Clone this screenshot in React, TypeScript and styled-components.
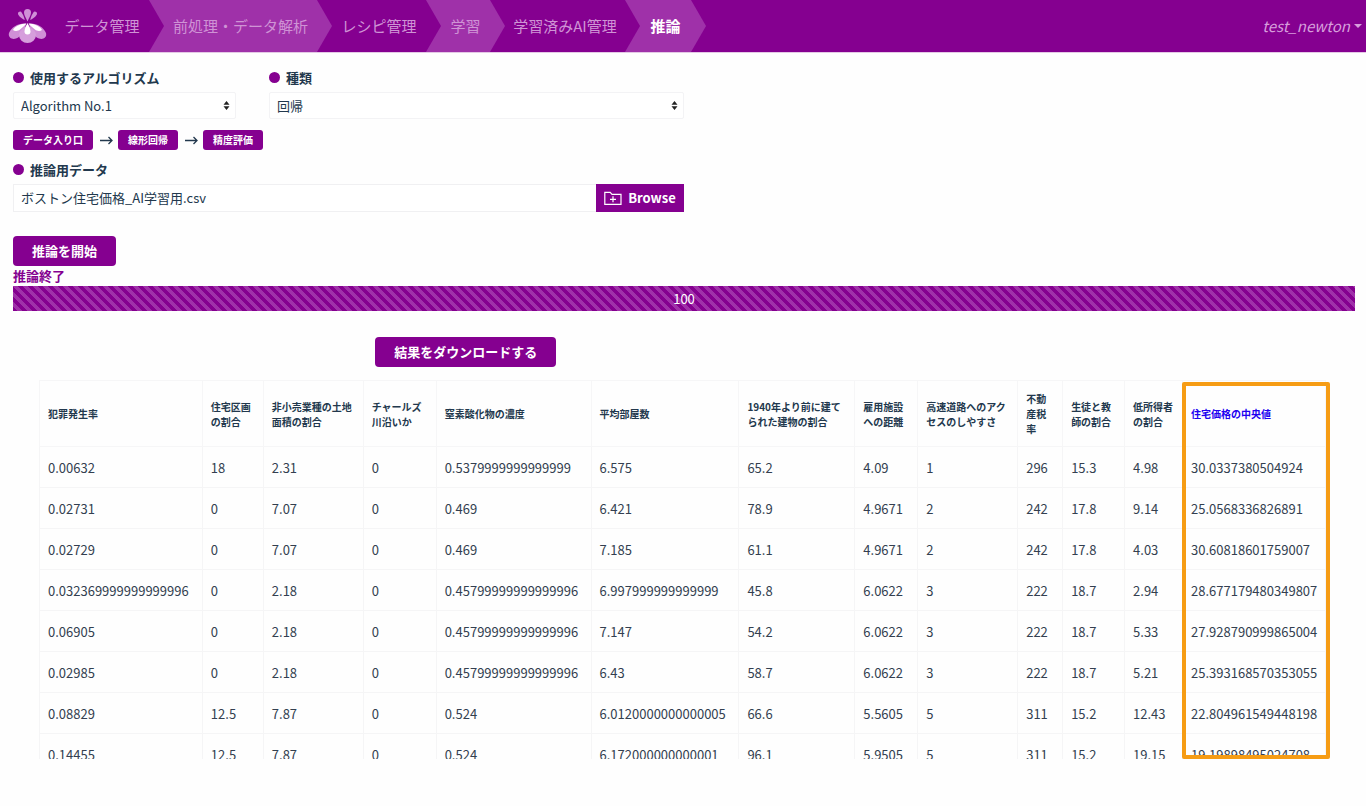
import React from "react";
import styled, { createGlobalStyle } from "styled-components";

const purple = "#850090";
const lightPurple = "#9f31a9";
const ink = "#22384d";

const GlobalStyle = createGlobalStyle`
  *, *::before, *::after { box-sizing: border-box; }
  body {
    margin: 0;
    background: #fefefe;
    color: ${ink};
    font-family: "Noto Sans CJK JP", sans-serif;
    font-size: 13px;
    line-height: 20px;
  }
  button, input, select { font: inherit; color: inherit; margin: 0; }
`;

const Header = styled.header`
  display: flex;
  align-items: center;
  height: 52px;
  background: ${purple};
  box-shadow: 0 1px 0 #e4c8e6;
`;

const LogoLink = styled.a`
  display: flex;
  padding-left: 8px;
`;

const Steps = styled.nav`
  display: flex;
  height: 100%;
`;

const Step = styled.a<{ $width: number; $tinted?: boolean; $active?: boolean; $order: number }>`
  position: relative;
  z-index: ${(p) => p.$order};
  display: flex;
  align-items: center;
  justify-content: center;
  width: ${(p) => p.$width}px;
  height: 100%;
  background: ${(p) => (p.$tinted ? lightPurple : purple)};
  color: ${(p) => (p.$active ? "#ffffff" : "#cf93d5")};
  font-size: 15px;
  font-weight: ${(p) => (p.$active ? 700 : 400)};
  text-decoration: none;
  white-space: nowrap;
  clip-path: polygon(0 0, calc(100% - 15px) 0, 100% 50%, calc(100% - 15px) 100%, 0 100%);

  &:first-child { padding-right: 8px; }
  & + & { margin-left: -15px; }
`;

const UserMenu = styled.button`
  display: flex;
  align-items: center;
  gap: 4px;
  margin-left: auto;
  padding: 0 4px 0 0;
  border: 0;
  background: none;
  color: #d79fdc;
  font-size: 15px;
  font-style: italic;
`;

const Caret = styled.span`
  border: 4px solid transparent;
  border-top-color: currentColor;
  border-bottom: 0;
`;

const Main = styled.main`
  padding: 17px 11px 0 13px;
`;

const Form = styled.form`
  width: 50%;
`;

const SelectGrid = styled.div`
  display: grid;
  grid-template-columns: 223fr 415fr;
  column-gap: 33px;
`;

const Label = styled.label`
  display: flex;
  align-items: center;
  gap: 6px;
  height: 17px;
  margin-bottom: 6px;
  font-weight: 700;

  &::before {
    content: "";
    width: 11px;
    height: 11px;
    border-radius: 50%;
    background: ${purple};
  }
`;

const SelectBox = styled.div`
  position: relative;

  svg {
    position: absolute;
    top: 9px;
    right: 6px;
    pointer-events: none;
  }
`;

const Select = styled.select`
  display: block;
  width: 100%;
  height: 27px;
  padding: 0 20px 0 7px;
  border: 1px solid #f3f3f5;
  border-radius: 2px;
  background: #ffffff;
  appearance: none;
`;

const Flow = styled.div`
  display: flex;
  align-items: center;
  margin: 11px 0;
`;

const FlowTag = styled.button`
  height: 20px;
  padding: 0 10px;
  border: 0;
  border-radius: 3px;
  background: ${purple};
  color: #ffffff;
  font-size: 10px;
  font-weight: 700;
  line-height: 20px;
`;

const FlowArrow = styled.span`
  display: flex;
  justify-content: center;
  width: 25px;
`;

const FileRow = styled.div`
  display: flex;
  height: 28px;
`;

const FileName = styled.input`
  flex: 1;
  min-width: 0;
  padding: 0 7px;
  border: 1px solid #f0f0f2;
  border-right: 0;
  background: #ffffff;
`;

const BrowseButton = styled.button`
  display: flex;
  align-items: center;
  justify-content: center;
  gap: 6px;
  width: 88px;
  padding: 0;
  border: 0;
  background: ${purple};
  color: #ffffff;
  font-weight: 700;
`;

const ActionButton = styled.button`
  display: block;
  height: 30px;
  padding: 0 19px;
  border: 0;
  border-radius: 4px;
  background: ${purple};
  color: #ffffff;
  font-weight: 700;
`;

const StartRow = styled.div`
  margin-top: 24px;
`;

const Status = styled.p`
  margin: 0;
  color: ${purple};
  font-weight: 700;
`;

const Progress = styled.div`
  height: 25px;
  background-color: ${purple};
  background-image: linear-gradient(
    45deg,
    ${lightPurple} 25%,
    transparent 25%,
    transparent 50%,
    ${lightPurple} 50%,
    ${lightPurple} 75%,
    transparent 75%
  );
  background-size: 10px 10px;
  color: #ffffff;
  line-height: 25px;
  text-align: center;
`;

const DownloadRow = styled.div`
  margin: 26px 0 13px;
  padding-left: 27%;
`;

const Result = styled.section`
  position: relative;
  margin: 0 29px 0 26px;
`;

const TableWindow = styled.div`
  max-height: 379px;
  overflow: hidden;
`;

const Table = styled.table`
  width: 100%;
  table-layout: fixed;
  border-collapse: collapse;
`;

const Column = styled.col<{ $share: number }>`
  width: ${(p) => p.$share}%;
`;

const HeadCell = styled.th<{ $target?: boolean }>`
  height: 66px;
  padding: 0 8px;
  border: 1px solid #f6f6f7;
  color: ${(p) => (p.$target ? "#2000f0" : ink)};
  font-size: 10px;
  font-weight: 700;
  line-height: 15px;
  text-align: left;
  white-space: pre-line;
`;

const Cell = styled.td`
  height: 41px;
  padding: 1px 8px 0;
  border: 1px solid #f5f5f6;
  color: #333f50;
  white-space: nowrap;
`;

const Highlight = styled.div<{ $share: number }>`
  position: absolute;
  top: 2px;
  right: -4px;
  bottom: 0;
  width: calc(${(p) => p.$share}% + 4px);
  border: 4px solid #f69c14;
  border-radius: 2px;
  pointer-events: none;
`;

const steps = [
  { label: "データ管理", width: 116 },
  { label: "前処理・データ解析", width: 183, tinted: true },
  { label: "レシピ管理", width: 124 },
  { label: "学習", width: 79, tinted: true },
  { label: "学習済みAI管理", width: 150 },
  { label: "推論", width: 81, tinted: true, active: true },
];

const columns = [
  { title: "犯罪発生率", size: 163 },
  { title: "住宅区画\nの割合", size: 61 },
  { title: "非小売業種の土地\n面積の割合", size: 100 },
  { title: "チャールズ\n川沿いか", size: 73 },
  { title: "窒素酸化物の濃度", size: 155 },
  { title: "平均部屋数", size: 148 },
  { title: "1940年より前に建て\nられた建物の割合", size: 116 },
  { title: "雇用施設\nへの距離", size: 63 },
  { title: "高速道路へのアク\nセスのしやすさ", size: 100 },
  { title: "不動\n産税\n率", size: 45 },
  { title: "生徒と教\n師の割合", size: 62 },
  { title: "低所得者\nの割合", size: 58 },
  { title: "住宅価格の中央値", size: 143, target: true },
];

const totalSize = columns.reduce((sum, c) => sum + c.size, 0);
const share = (size: number) => (size / totalSize) * 100;
const targetShare = share(columns[columns.length - 1].size + 1);

const rows = [
  ["0.00632", "18", "2.31", "0", "0.5379999999999999", "6.575", "65.2", "4.09", "1", "296", "15.3", "4.98", "30.0337380504924"],
  ["0.02731", "0", "7.07", "0", "0.469", "6.421", "78.9", "4.9671", "2", "242", "17.8", "9.14", "25.0568336826891"],
  ["0.02729", "0", "7.07", "0", "0.469", "7.185", "61.1", "4.9671", "2", "242", "17.8", "4.03", "30.60818601759007"],
  ["0.032369999999999996", "0", "2.18", "0", "0.45799999999999996", "6.997999999999999", "45.8", "6.0622", "3", "222", "18.7", "2.94", "28.677179480349807"],
  ["0.06905", "0", "2.18", "0", "0.45799999999999996", "7.147", "54.2", "6.0622", "3", "222", "18.7", "5.33", "27.928790999865004"],
  ["0.02985", "0", "2.18", "0", "0.45799999999999996", "6.43", "58.7", "6.0622", "3", "222", "18.7", "5.21", "25.393168570353055"],
  ["0.08829", "12.5", "7.87", "0", "0.524", "6.0120000000000005", "66.6", "5.5605", "5", "311", "15.2", "12.43", "22.804961549448198"],
  ["0.14455", "12.5", "7.87", "0", "0.524", "6.172000000000001", "96.1", "5.9505", "5", "311", "15.2", "19.15", "19.19898495024708"],
];

const Logo = () => (
  <svg width="40" height="36" viewBox="0 0 40 36" aria-hidden="true">
    <g fill="#d08fd7">
      <path d="M19.500 13.500C17.800 9.500 16 7 16 4.500a3.500 3.500 0 0 1 7 0c0 2.500-1.800 5-3.500 9z" />
      <path d="M16.800 12c-3-1.500-6.300-4-6.800-6a2 2 0 0 1 3.800-1.200c1.200 1.700 2.300 4.200 3 7.200z" />
      <path d="M22.200 12c3-1.500 6.300-4 6.800-6a2 2 0 0 0-3.800-1.200c-1.200 1.700-2.300 4.200-3 7.200z" />
      <path d="M18 15.500C10 15 3.500 19 1 25c-1.200 4.500 3 7 7 5.500C13 29 17 23 18 15.500z" />
      <path d="M21 15.500c8-.5 14.500 3.500 17 9.500 1.200 4.500-3 7-7 5.500C26 29 22 23 21 15.500z" />
    </g>
    <path d="M18.500 15.500c-6 0-12 3-13.500 6.500 2 1.500 5 1.200 7-.5 2.400-2 5-3.800 6.500-6z" fill="#ffffff" />
    <path d="M20.500 15.500c6 0 12 3 13.500 6.500-2 1.500-5 1.200-7-.5-2.400-2-5-3.800-6.500-6z" fill="#ffffff" />
    <path d="M19.500 16c1.500 4 8.500 5.500 8.500 11a8.500 8 0 0 1-17 0c0-5.500 7-7 8.500-11z" fill="#d69edc" />
    <path d="M19.500 15c1.500 3 3 6 3 8.500a3 3 0 0 1-6 0c0-2.500 1.500-5.500 3-8.500z" fill="#ffffff" />
  </svg>
);

const SortArrows = () => (
  <svg width="7" height="9" viewBox="0 0 7 9" aria-hidden="true">
    <path d="M3.500 0 6.500 3.700H.5zM3.500 9 .5 5.300h6z" fill="#222" />
  </svg>
);

const FolderPlus = () => (
  <svg width="18" height="15" viewBox="0 0 18 15" fill="none" stroke="#fff" strokeWidth="1.2" aria-hidden="true">
    <path d="M.8 13.300V1.400h5.400l1.800 2h9v9.900zM9 5.300v6M6 8.300h6" />
  </svg>
);

const Arrow = () => (
  <FlowArrow>
    <svg width="14" height="9" viewBox="0 0 14 9" fill="none" stroke={ink} strokeWidth="1.3" aria-hidden="true">
      <path d="M1 4.500h12M9.500 1l3.500 3.500L9.500 8" />
    </svg>
  </FlowArrow>
);

export default function App() {
  return (
    <>
      <GlobalStyle />
      <Header>
        <LogoLink href="#" aria-label="ホーム">
          <Logo />
        </LogoLink>
        <Steps>
          {steps.map((s, i) => (
            <Step
              key={s.label}
              href="#"
              $width={s.width}
              $tinted={s.tinted}
              $active={s.active}
              $order={steps.length - i}
              aria-current={s.active ? "page" : undefined}
            >
              {s.label}
            </Step>
          ))}
        </Steps>
        <UserMenu type="button">
          test_newton
          <Caret />
        </UserMenu>
      </Header>

      <Main>
        <Form onSubmit={(e) => e.preventDefault()}>
          <SelectGrid>
            <div>
              <Label htmlFor="algorithm">使用するアルゴリズム</Label>
              <SelectBox>
                <Select id="algorithm">
                  <option>Algorithm No.1</option>
                </Select>
                <SortArrows />
              </SelectBox>
            </div>
            <div>
              <Label htmlFor="kind">種類</Label>
              <SelectBox>
                <Select id="kind">
                  <option>回帰</option>
                </Select>
                <SortArrows />
              </SelectBox>
            </div>
          </SelectGrid>

          <Flow>
            <FlowTag type="button">データ入り口</FlowTag>
            <Arrow />
            <FlowTag type="button">線形回帰</FlowTag>
            <Arrow />
            <FlowTag type="button">精度評価</FlowTag>
          </Flow>

          <Label htmlFor="file">推論用データ</Label>
          <FileRow>
            <FileName id="file" type="text" readOnly value="ボストン住宅価格_AI学習用.csv" />
            <BrowseButton type="button">
              <FolderPlus />
              Browse
            </BrowseButton>
          </FileRow>

          <StartRow>
            <ActionButton type="submit">推論を開始</ActionButton>
          </StartRow>
        </Form>

        <Status>推論終了</Status>
        <Progress role="progressbar" aria-valuenow={100} aria-valuemin={0} aria-valuemax={100}>
          100
        </Progress>

        <DownloadRow>
          <ActionButton type="button">結果をダウンロードする</ActionButton>
        </DownloadRow>

        <Result>
          <TableWindow>
            <Table>
              <colgroup>
                {columns.map((c) => (
                  <Column key={c.title} $share={share(c.size)} />
                ))}
              </colgroup>
              <thead>
                <tr>
                  {columns.map((c) => (
                    <HeadCell key={c.title} scope="col" $target={c.target}>
                      {c.title}
                    </HeadCell>
                  ))}
                </tr>
              </thead>
              <tbody>
                {rows.map((r) => (
                  <tr key={r[0]}>
                    {r.map((value, i) => (
                      <Cell key={columns[i].title}>{value}</Cell>
                    ))}
                  </tr>
                ))}
              </tbody>
            </Table>
          </TableWindow>
          <Highlight $share={targetShare} />
        </Result>
      </Main>
    </>
  );
}
